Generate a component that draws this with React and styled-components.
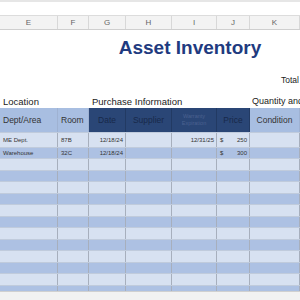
import styled, { createGlobalStyle } from 'styled-components';

const GlobalStyle = createGlobalStyle`
  html, body { margin: 0; padding: 0; background: #fff; overflow: hidden; }
  body { font-family: "Liberation Sans", Arial, sans-serif; }
`;

const COLS = '58px 31px 37px 46px 45px 33px 50px';
const letters = ['E', 'F', 'G', 'H', 'I', 'J', 'K'];

const rows = [
  { dept: 'ME Dept.', room: '87B', date: '12/18/24', warranty: '12/31/25', price: '250' },
  { dept: 'Warehouse', room: '32C', date: '12/18/24', warranty: '', price: '300' },
  ...Array.from({ length: 12 }, () => ({}))
];

const App = () => {
  return (
    <>
      <GlobalStyle />
      <Sheet>
        <TopStrip />
        <LetterRow>
          {letters.map((l) => (
            <Letter key={l}>{l}</Letter>
          ))}
        </LetterRow>
        <TitleArea>
          <Title>Asset Inventory</Title>
          <Total>Total</Total>
        </TitleArea>
        <SectionRow>
          <Section $span="1 / 3">Location</Section>
          <Section $span="3 / 7">Purchase Information</Section>
          <Section $span="7 / 8" $tight>Quantity and</Section>
        </SectionRow>
        <HeadRow>
          <HeadCell>Dept/Area</HeadCell>
          <HeadCell>Room</HeadCell>
          <HeadCell $dark $center>Date</HeadCell>
          <HeadCell $dark $center>Supplier</HeadCell>
          <HeadCell $dark $center $small>Warranty<br />Expiration</HeadCell>
          <HeadCell $dark $center>Price</HeadCell>
          <HeadCell $center>Condition</HeadCell>
        </HeadRow>
        <Body>
          {rows.map((r, i) => (
            <DataRow key={i} $alt={i % 2 === 1} $first={i === 0}>
              <Cell>{r.dept}</Cell>
              <Cell>{r.room}</Cell>
              <Cell $right>{r.date}</Cell>
              <Cell />
              <Cell $right>{r.warranty}</Cell>
              <Cell>
                {r.price && (
                  <Money>
                    <span>$</span>
                    <span>{r.price}</span>
                  </Money>
                )}
              </Cell>
              <Cell />
            </DataRow>
          ))}
        </Body>
        <Footer />
      </Sheet>
    </>
  );
};

const Sheet = styled.div`
  width: 300px;
  height: 300px;
  overflow: hidden;
  display: flex;
  flex-direction: column;
`;

const TopStrip = styled.div`
  height: 15px;
  flex: none;
  border-top: 2px solid #e6e6e6;
  box-sizing: border-box;
  background: #fff;
`;

const LetterRow = styled.div`
  display: grid;
  grid-template-columns: ${COLS};
  height: 15px;
  flex: none;
  background: #f3f3f3;
  border-bottom: 1px solid #cfcfcf;
  border-top: 1px solid #dcdcdc;
  box-sizing: border-box;
`;

const Letter = styled.div`
  font-size: 8px;
  color: #666;
  display: flex;
  align-items: center;
  justify-content: center;
  border-right: 1px solid #d8d8d8;
`;

const TitleArea = styled.div`
  height: 64px;
  flex: none;
  display: flex;
  flex-direction: column;
  align-items: center;
`;

const Title = styled.h1`
  margin: 7px 0 0 80px;
  font-size: 19px;
  line-height: 22px;
  font-weight: bold;
  color: #1f3b80;
`;

const Total = styled.div`
  align-self: flex-end;
  margin: 16px 1px 0 0;
  font-size: 8.5px;
  color: #222;
`;

const SectionRow = styled.div`
  display: grid;
  grid-template-columns: ${COLS};
  height: 14px;
  flex: none;
  align-items: center;
`;

const Section = styled.div`
  grid-column: ${(p) => p.$span};
  font-size: ${(p) => (p.$tight ? '9px' : '9.5px')};
  color: #222;
  padding-left: ${(p) => (p.$tight ? '2px' : '3px')};
  white-space: nowrap;
  overflow: hidden;
`;

const HeadRow = styled.div`
  display: grid;
  grid-template-columns: ${COLS};
  height: 24px;
  flex: none;
`;

const HeadCell = styled.div`
  display: flex;
  align-items: center;
  justify-content: ${(p) => (p.$center ? 'center' : 'flex-start')};
  text-align: center;
  padding-left: ${(p) => (p.$center ? '0' : '3px')};
  background: ${(p) => (p.$dark ? '#2a4676' : '#a8bee1')};
  color: ${(p) => (p.$dark ? (p.$small ? '#4a6190' : '#18294a') : '#333')};
  font-size: ${(p) => (p.$small ? '5.5px' : '8.5px')};
  line-height: ${(p) => (p.$small ? '7px' : '1')};
  border-right: 1px solid ${(p) => (p.$dark ? '#223a63' : '#9fb2d2')};
  white-space: nowrap;
`;

const Body = styled.div`
  flex: 1;
  overflow: hidden;
`;

const DataRow = styled.div`
  display: grid;
  grid-template-columns: ${COLS};
  height: ${(p) => (p.$first ? '14.5px' : '11.5px')};
  background: ${(p) => (p.$alt ? '#adc1e3' : '#d7e1f1')};
  border-top: 1px solid #c0cbdc;
  box-sizing: border-box;
`;

const Cell = styled.div`
  display: flex;
  align-items: center;
  justify-content: ${(p) => (p.$right ? 'flex-end' : 'flex-start')};
  padding: 0 2px 0 3px;
  font-size: 6px;
  color: #333;
  border-right: 1px solid #a7afbd;
  white-space: nowrap;
  overflow: hidden;
`;

const Money = styled.div`
  display: flex;
  justify-content: space-between;
  width: 100%;
`;

const Footer = styled.div`
  height: 8px;
  flex: none;
  background: #f2f2f2;
  border-top: 1px solid #d0d0d0;
`;

export default App;
